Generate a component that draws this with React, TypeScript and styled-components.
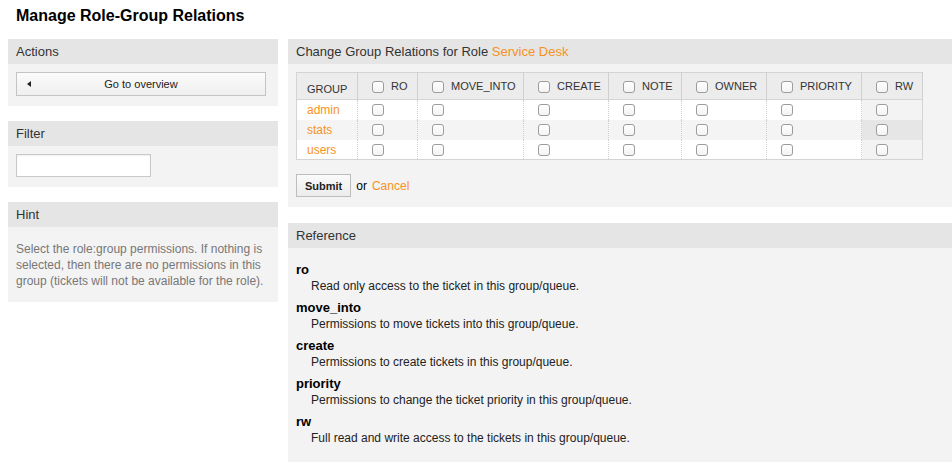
import styled, { createGlobalStyle } from "styled-components";

const GlobalStyle = createGlobalStyle`
  body {
    margin: 0;
    background: #fff;
    font-family: "Liberation Sans", Arial, Helvetica, sans-serif;
    color: #000;
  }
`;

const ORANGE = "#f7921e";

const Page = styled.div`
  padding: 0 0 20px 8px;
`;

const Title = styled.h1`
  margin: 0 0 13px;
  padding: 6px 8px 0;
  font-size: 16px;
  line-height: 20px;
  font-weight: bold;
  color: #000;
`;

const Columns = styled.div`
  display: grid;
  grid-template-columns: 270px 1fr;
  gap: 10px;
  align-items: start;
`;

const Stack = styled.div<{ gap: number }>`
  display: flex;
  flex-direction: column;
  gap: ${(p) => p.gap}px;
`;

const Widget = styled.section``;

const WidgetHeader = styled.h2`
  margin: 0;
  height: 25px;
  padding: 0 8px;
  background: #e5e5e5;
  font-size: 13px;
  line-height: 25px;
  font-weight: normal;
  color: #333;
`;

const WidgetBody = styled.div`
  background: #f3f3f3;
  padding: 8px 8px 10px;
`;

const OverviewButton = styled.button`
  position: relative;
  display: block;
  width: 250px;
  height: 24px;
  margin: 0;
  border: 1px solid #c4c4c4;
  background: linear-gradient(#fbfbfb, #efefef);
  font-family: inherit;
  font-size: 11px;
  color: #222;
  cursor: pointer;
`;

const Arrow = styled.span`
  position: absolute;
  left: 10px;
  top: 8px;
  width: 0;
  height: 0;
  border-top: 3.5px solid transparent;
  border-bottom: 3.5px solid transparent;
  border-right: 4px solid #222;
`;

const FilterInput = styled.input`
  display: block;
  box-sizing: border-box;
  width: 135px;
  height: 23px;
  margin: 0;
  border: 1px solid #c8c8c8;
  background: #fff;
  box-shadow: inset 0 1px 2px rgba(0, 0, 0, 0.06);
`;

const HintText = styled.p`
  margin: 6px 0 3px;
  font-size: 12px;
  line-height: 16px;
  color: #777;
`;

const Accent = styled.span`
  color: ${ORANGE};
`;

const Table = styled.table`
  width: 626px;
  border-collapse: collapse;
  border: 1px solid #d4d4d4;
  background: #fff;
  table-layout: fixed;
`;

const Col = styled.col<{ w: number }>`
  width: ${(p) => p.w}px;
`;

const HeadRow = styled.tr`
  height: 27px;
`;

const HeadCell = styled.th<{ low?: boolean }>`
  padding: ${(p) => (p.low ? "0 10px 3px" : "2px 10px 0")};
  vertical-align: ${(p) => (p.low ? "bottom" : "middle")};
  background: #ececec;
  border-right: 1px solid #d0d0d0;
  border-bottom: 1px solid #d4d4d4;
  text-align: left;
  font-size: 11px;
  line-height: 13px;
  font-weight: normal;
  color: #333;
  white-space: nowrap;
  overflow: hidden;
`;

const Row = styled.tr<{ odd: boolean }>`
  height: 20px;
  background: ${(p) => (p.odd ? "#f4f4f4" : "#fff")};
`;

const Cell = styled.td<{ shade?: string }>`
  height: 20px;
  box-sizing: border-box;
  padding: 1px 10px 0;
  border-right: 1px dotted #cfcfcf;
  font-size: 12px;
  line-height: 16px;
  background: ${(p) => p.shade ?? "transparent"};
  &:last-child {
    border-right: none;
  }
`;

const GroupLink = styled.a`
  color: ${ORANGE};
  text-decoration: none;
`;

const Check = styled.input.attrs({ type: "checkbox" })`
  appearance: none;
  box-sizing: border-box;
  width: 12px;
  height: 12px;
  margin: 0 7px 0 4px;
  vertical-align: middle;
  border: 1px solid #9c9c9c;
  border-radius: 3px;
  background: linear-gradient(#ffffff, #f3f3f3);
  position: relative;
  top: -1px;
`;

const FormActions = styled.div`
  display: flex;
  align-items: center;
  gap: 5px;
  margin-top: 14px;
  font-size: 12px;
`;

const SubmitButton = styled.button`
  height: 23px;
  padding: 0 8px;
  margin: 0;
  border: 1px solid #bdbdbd;
  background: linear-gradient(#fafafa, #ececec);
  font-family: inherit;
  font-size: 11px;
  font-weight: bold;
  color: #222;
`;

const DefList = styled.dl`
  margin: 6px 0 0;
`;

const Term = styled.dt`
  font-size: 13px;
  line-height: 16px;
  font-weight: bold;
  color: #000;
`;

const Desc = styled.dd`
  margin: 0 0 6px 15px;
  font-size: 12px;
  line-height: 16px;
  color: #222;
`;

const columns = [
  { key: "ro", label: "RO", w: 60 },
  { key: "move_into", label: "MOVE_INTO", w: 106 },
  { key: "create", label: "CREATE", w: 85 },
  { key: "note", label: "NOTE", w: 73 },
  { key: "owner", label: "OWNER", w: 85 },
  { key: "priority", label: "PRIORITY", w: 95 },
  { key: "rw", label: "RW", w: 61 },
];

const groups = ["admin", "stats", "users"];

const reference = [
  { term: "ro", desc: "Read only access to the ticket in this group/queue." },
  { term: "move_into", desc: "Permissions to move tickets into this group/queue." },
  { term: "create", desc: "Permissions to create tickets in this group/queue." },
  { term: "priority", desc: "Permissions to change the ticket priority in this group/queue." },
  { term: "rw", desc: "Full read and write access to the tickets in this group/queue." },
];

export default function App() {
  return (
    <>
      <GlobalStyle />
      <Page>
        <Title>Manage Role-Group Relations</Title>
        <Columns>
          <Stack gap={15}>
            <Widget>
              <WidgetHeader>Actions</WidgetHeader>
              <WidgetBody>
                <OverviewButton>
                  <Arrow />
                  Go to overview
                </OverviewButton>
              </WidgetBody>
            </Widget>
            <Widget>
              <WidgetHeader>Filter</WidgetHeader>
              <WidgetBody>
                <FilterInput />
              </WidgetBody>
            </Widget>
            <Widget>
              <WidgetHeader>Hint</WidgetHeader>
              <WidgetBody>
                <HintText>
                  Select the role:group permissions. If nothing is selected,
                  then there are no permissions in this group (tickets will not
                  be available for the role).
                </HintText>
              </WidgetBody>
            </Widget>
          </Stack>

          <Stack gap={16}>
            <Widget>
              <WidgetHeader>
                Change Group Relations for Role <Accent>Service Desk</Accent>
              </WidgetHeader>
              <WidgetBody>
                <Table>
                  <colgroup>
                    <Col w={61} />
                    {columns.map((c) => (
                      <Col key={c.key} w={c.w} />
                    ))}
                  </colgroup>
                  <thead>
                    <HeadRow>
                      <HeadCell low>GROUP</HeadCell>
                      {columns.map((c) => (
                        <HeadCell key={c.key}>
                          <Check />
                          {c.label}
                        </HeadCell>
                      ))}
                    </HeadRow>
                  </thead>
                  <tbody>
                    {groups.map((g, i) => (
                      <Row key={g} odd={i % 2 === 1}>
                        <Cell>
                          <GroupLink href="#">{g}</GroupLink>
                        </Cell>
                        {columns.map((c) => (
                          <Cell
                            key={c.key}
                            shade={
                              c.key === "rw"
                                ? i % 2 === 1
                                  ? "#e6e6e6"
                                  : "#f3f3f3"
                                : undefined
                            }
                          >
                            <Check />
                          </Cell>
                        ))}
                      </Row>
                    ))}
                  </tbody>
                </Table>
                <FormActions>
                  <SubmitButton>Submit</SubmitButton>
                  <span>or</span>
                  <GroupLink href="#">Cancel</GroupLink>
                </FormActions>
              </WidgetBody>
            </Widget>
            <Widget>
              <WidgetHeader>Reference</WidgetHeader>
              <WidgetBody>
                <DefList>
                  {reference.map((r) => (
                    <div key={r.term}>
                      <Term>{r.term}</Term>
                      <Desc>{r.desc}</Desc>
                    </div>
                  ))}
                </DefList>
              </WidgetBody>
            </Widget>
          </Stack>
        </Columns>
      </Page>
    </>
  );
}
